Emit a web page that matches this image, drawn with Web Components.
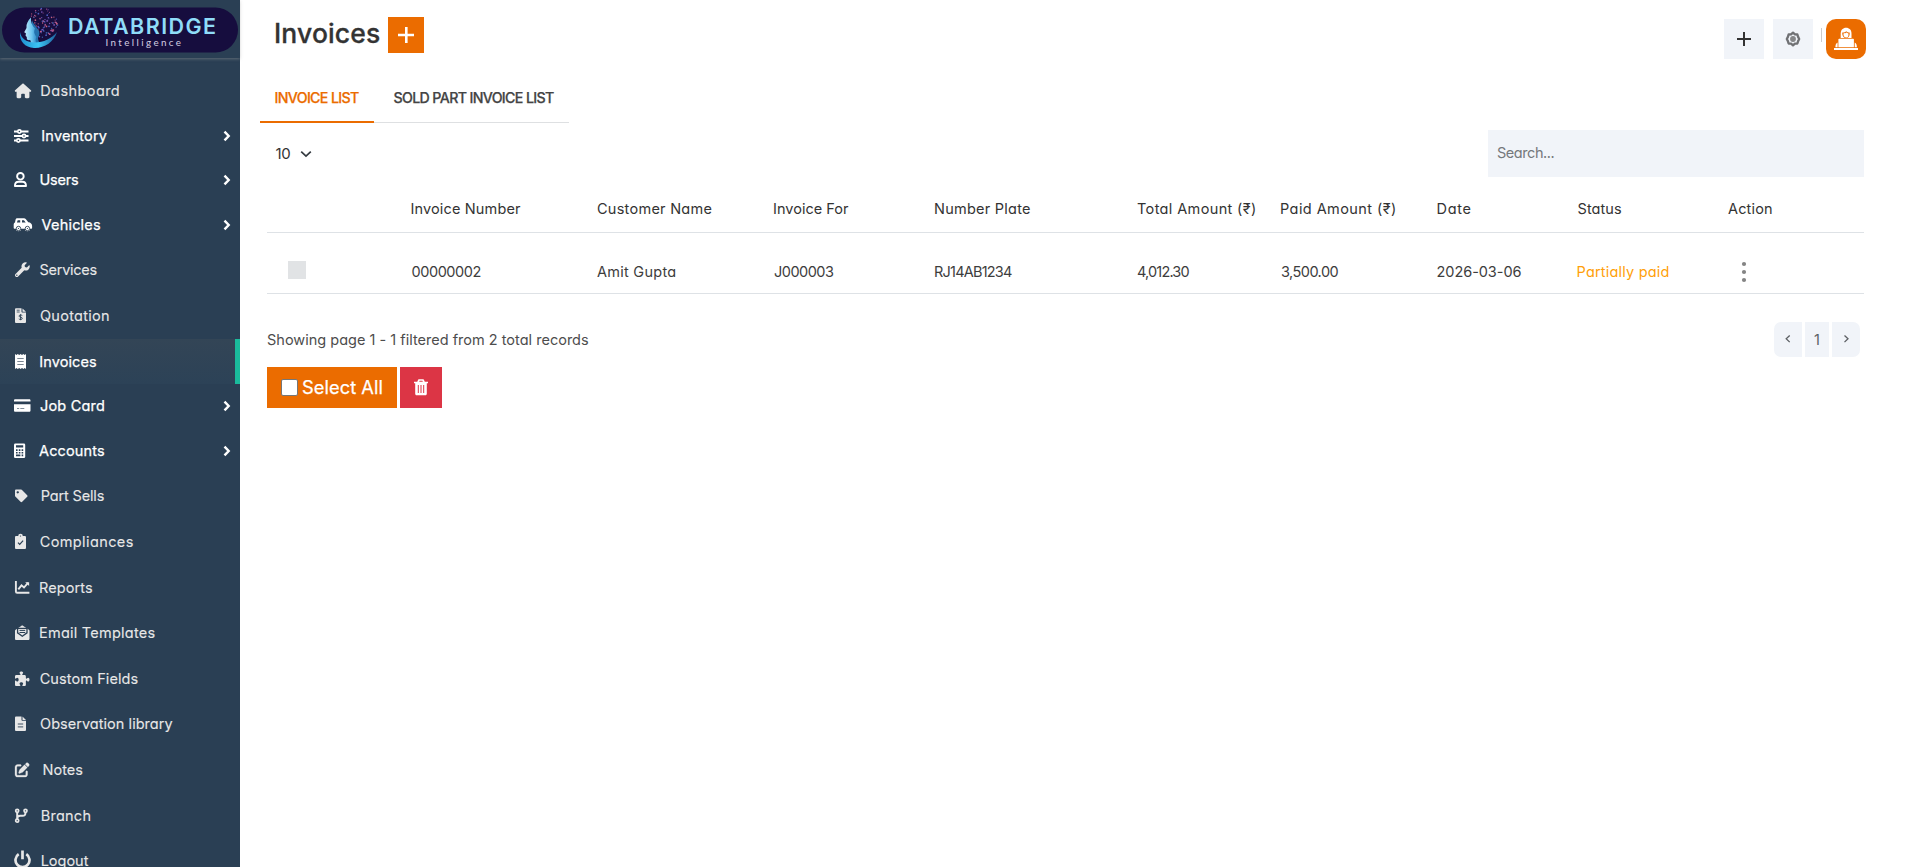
<!DOCTYPE html>
<html lang="en">
<head>
<meta charset="utf-8">
<title>Invoices</title>
<style>
html,body{margin:0;height:100%;overflow:hidden;background:#fff}
body{font-family:Inter,"Open Sans","Noto Sans",sans-serif;font-size:14.5px;font-feature-settings:"cv11";color:#333}
</style>
</head>
<body>
<app-shell></app-shell>
<script>
const define = (name, html, init) => customElements.define(name, class extends HTMLElement {
  constructor() {
    super();
    this.attachShadow({mode: 'open'});
  }
  connectedCallback() {
    if (this.ready) return;
    this.ready = true;
    this.shadowRoot.innerHTML = typeof html === 'function' ? html(this) : html;
    if (init) init(this);
  }
});

/* Text whose visible ink spans a given width, by adjusting its tracking. */
const ctx = document.createElement('canvas').getContext('2d');
define('fit-text', '<style>:host{display:inline-block;white-space:pre;vertical-align:top}</style><slot></slot>', el => {
  const cs = getComputedStyle(el), text = el.textContent;
  ctx.font = `${cs.fontWeight} ${cs.fontSize} ${cs.fontFamily}`;
  const first = ctx.measureText(text[0]), last = ctx.measureText(text[text.length - 1]);
  const lb = -first.actualBoundingBoxLeft, rb = last.width - last.actualBoundingBoxRight;
  const ink = el.getBoundingClientRect().width - lb - rb;
  if (text.length > 1) el.style.letterSpacing = ((+el.getAttribute('w') - ink) / (text.length - 1)).toFixed(3) + 'px';
  el.style.marginLeft = (-lb).toFixed(2) + 'px';
});

const B = 'var(--bg)';
const ICONS = {
  home: '<path transform="translate(1.8 2.6) scale(.0285)" d="M575.8 255.5c0 18-15 32.1-32 32.1h-32l.7 160.2c0 2.7-.2 5.4-.5 8.1V472c0 22.1-17.9 40-40 40H392c-22.1 0-40-17.9-40-40V384c0-17.7-14.3-32-32-32H256c-17.7 0-32 14.3-32 32v88c0 22.1-17.9 40-40 40H104c-22.1 0-40-17.9-40-40V287.6H32c-18 0-32-14-32-32.1c0-9 3-17 10-24L266.4 8c7-7 15-8 22-8s15 2 21 7L564.8 231.5c8 7 12 15 11 24z"/>',
  sliders: `<path d="M1 5.5h14.5M1 10h14.5M1 14.5h14.5" stroke="currentColor" stroke-width="2" fill="none"/><g fill="${B}" stroke="currentColor" stroke-width="1.6"><circle cx="6.4" cy="5.5" r="1.6"/><circle cx="11" cy="10" r="1.6"/><circle cx="5.4" cy="14.5" r="1.6"/></g>`,
  user: '<g fill="none" stroke="currentColor" stroke-width="1.9"><circle cx="7.4" cy="6.3" r="3.3"/><path d="M1.900 16c0-3 1.600-4.200 3.700-4.200h3.700c2.100 0 3.700 1.200 3.700 4.200z" stroke-linejoin="round"/></g>',
  car: `<path d="M4.3 3.2h6.600c.8 0 1.500.4 2 1l2.400 3.100c2.300.2 3.800 1.600 3.800 3.700v1.800c0 .6-.4 1-1 1h-1.200a2.500 2.500 0 0 1-5 0H8a2.500 2.500 0 0 1-5 0H1.700c-.6 0-1-.4-1-1V9.500c0-1 .5-1.800 1.300-2.100L2.600 4.400c.3-.7.9-1.200 1.700-1.200z"/><path d="M4.700 5.200h2.500v2.200H3.900zM9 5.200h2l1.700 2.200H9z" fill="${B}"/><g fill="currentColor" stroke="${B}" stroke-width=".9"><circle cx="5.500" cy="13.500" r="2.200"/><circle cx="14.400" cy="13.500" r="2.200"/></g><g fill="${B}"><circle cx="5.500" cy="13.500" r=".6"/><circle cx="14.400" cy="13.500" r=".6"/></g>`,
  wrench: '<path transform="translate(2 2.300) scale(.0288)" d="M507.730 109.100c-2.240-9.030-13.540-12.090-20.120-5.510l-74.360 74.360-67.880-11.310-11.310-67.880 74.360-74.360c6.620-6.620 3.430-17.900-5.660-20.160-47.380-11.740-99.550.910-136.580 37.930-39.640 39.640-50.550 97.100-34.050 147.200L18.740 402.760c-24.990 24.990-24.990 65.510 0 90.500 24.990 24.990 65.510 24.990 90.500 0l213.210-213.210c50.120 16.710 107.470 5.680 147.370-34.220 37.070-37.070 49.700-89.320 37.910-136.730zM64 472c-13.250 0-24-10.750-24-24 0-13.260 10.750-24 24-24s24 10.740 24 24c0 13.250-10.750 24-24 24z"/>',
  quote: `<path d="M3.200 2.300h5.300v3.200c0 .6.4 1 1 1H13v9.200c0 .8-.5 1.300-1.300 1.300H3.300c-.8 0-1.300-.5-1.300-1.300V3.500c0-.7.5-1.200 1.200-1.200zM9.500 2.400 13 5.700H9.500z"/><path d="M3.700 4.200h3M3.700 6h3" stroke="${B}" stroke-width=".8"/><path d="M9.300 9.500c-.5-.5-3.300-.9-3.300.6 0 1.400 3.300.8 3.300 2.300 0 1.400-2.700 1.300-3.500.5M7.600 8.200v6" fill="none" stroke="${B}" stroke-width=".9"/>`,
  receipt: `<path d="M2 2l1.400 1.100L4.800 2l1.400 1.100L7.600 2 9 3.100 10.400 2l1.300 1.100L13 2v15l-1.300-1.100L10.400 17 9 15.900 7.600 17l-1.400-1.100L4.800 17l-1.400-1.100L2 17z"/><path d="M4.300 6.500h6.400M4.300 9.500h6.400M4.300 12.500h6.400" stroke="${B}" stroke-width=".8" opacity=".8"/>`,
  card: `<path d="M2.300 3.200h13.900c.8 0 1.300.5 1.300 1.300v.9H1v-.9c0-.8.500-1.300 1.300-1.300zM1 8.200h16.500v6.300c0 .8-.5 1.300-1.300 1.300H2.300c-.8 0-1.300-.5-1.300-1.300z"/><path d="M4 12.500h2.200M7.300 12.500h4" stroke="${B}" stroke-width=".6"/>`,
  calc: `<rect x="1" y="2.400" width="11.200" height="14.600" rx="1.300"/><path d="M3 4.300h7.200v2.200H3zM3 8.300h1.600v1.600H3zM5.800 8.300h1.600v1.600H5.800zM8.600 8.300h1.600v1.600H8.600zM3 11h1.600v1.600H3zM5.800 11h1.600v1.600H5.800zM8.600 11h1.600v1.600H8.600zM3 13.600h4.400v1.600H3zM8.600 13.600h1.600v1.600H8.600z" fill="${B}"/>`,
  tag: '<path transform="translate(2 3.600) scale(.0245)" d="M0 252.118V48C0 21.490 21.490 0 48 0h204.118a48 48 0 0 1 33.941 14.059l211.882 211.882c18.745 18.745 18.745 49.137 0 67.882L293.823 497.941c-18.745 18.745-49.137 18.745-67.882 0L14.059 286.059A48 48 0 0 1 0 252.118zM112 64c-26.510 0-48 21.490-48 48s21.490 48 48 48 48-21.490 48-48-21.490-48-48-48z"/>',
  clip: `<path d="M3.300 4h1.900a2.300 2.300 0 0 1 4.600 0h1.900c.8 0 1.300.5 1.300 1.300v10.400c0 .8-.5 1.300-1.300 1.300H3.300c-.8 0-1.300-.5-1.300-1.300V5.300C2 4.500 2.500 4 3.300 4z"/><circle cx="7.500" cy="4" r=".6" fill="${B}"/><path d="M5 10.700l1.700 1.700 3.400-3.800" fill="none" stroke="${B}" stroke-width="1.200"/>`,
  chart: '<path d="M2.900 3v10.500c0 .8.400 1.300 1.200 1.300h12.300" fill="none" stroke="currentColor" stroke-width="1.900"/><path d="M5.300 11.300l3.200-4 2.500 2.200 4-4.700" fill="none" stroke="currentColor" stroke-width="1.900"/><path d="M12.200 4.200h3.900v3.900z"/>',
  mail: `<path d="M2 7.800c0-.5.200-.8.600-1.100L8.200 2.900c.7-.5 1.400-.5 2.100 0l5.600 3.800c.4.300.6.600.6 1.100v7.900c0 .8-.5 1.300-1.300 1.300H3.300c-.8 0-1.300-.5-1.300-1.300z"/><path d="M4.600 5.300h9.400v4.500l-4.700 3.500-4.700-3.500z" fill="currentColor" stroke="${B}" stroke-width="1.300"/><path d="M6.500 7.400h5.700M6.500 9.500h5.700" stroke="${B}" stroke-width="1" fill="none"/>`,
  puzzle: '<path transform="translate(2 2.500) scale(.0283)" d="M192 104.800c0-9.200-5.800-17.300-13.200-22.800C167.200 73.300 160 61.300 160 48c0-26.500 28.700-48 64-48s64 21.500 64 48c0 13.300-7.200 25.300-18.800 34c-7.400 5.500-13.200 13.600-13.200 22.800c0 12.800 10.400 23.200 23.200 23.200H336c26.500 0 48 21.500 48 48v56.800c0 12.800 10.400 23.200 23.200 23.200c9.200 0 17.300-5.800 22.800-13.200c8.700-11.600 20.700-18.800 34-18.800c26.500 0 48 28.700 48 64s-21.500 64-48 64c-13.300 0-25.300-7.200-34-18.800c-5.500-7.400-13.600-13.200-22.800-13.200c-12.800 0-23.200 10.400-23.200 23.200V464c0 26.500-21.500 48-48 48H279.200c-12.800 0-23.200-10.400-23.200-23.200c0-9.200 5.800-17.300 13.200-22.800c11.600-8.700 18.800-20.700 18.800-34c0-26.500-28.700-48-64-48s-64 21.500-64 48c0 13.300 7.200 25.300 18.800 34c7.400 5.500 13.200 13.600 13.200 22.800c0 12.800-10.400 23.200-23.200 23.200H48c-26.500 0-48-21.500-48-48V343.200C0 330.400 10.400 320 23.200 320c9.200 0 17.300 5.800 22.800 13.200C54.700 344.800 66.700 352 80 352c26.500 0 48-28.700 48-64s-21.500-64-48-64c-13.300 0-25.300 7.200-34 18.800C40.500 250.200 32.400 256 23.200 256C10.400 256 0 245.600 0 232.800V176c0-26.500 21.500-48 48-48H168.800c12.800 0 23.200-10.400 23.200-23.200z"/>',
  file: `<path d="M3.300 2.500h5.200v3.200c0 .6.400 1 1 1H13v9c0 .8-.5 1.300-1.300 1.300H3.300c-.8 0-1.300-.5-1.300-1.300V3.800c0-.8.500-1.300 1.300-1.300zM9.500 2.600 13 5.900H9.500z"/><path d="M4.800 10h5.400M4.800 12.900h5.400" stroke="${B}" stroke-width=".9"/>`,
  pen: '<path transform="translate(2 2.700) scale(.0281)" stroke="currentColor" stroke-width="10" d="M471.600 21.700c-21.900-21.900-57.300-21.900-79.200 0L362.300 51.700l97.900 97.900 30.100-30.100c21.900-21.900 21.900-57.300 0-79.200L471.600 21.700zm-299.200 220c-6.100 6.100-10.800 13.600-13.500 21.900l-29.600 88.800c-2.900 8.600-.6 18.100 5.800 24.600s15.900 8.700 24.600 5.800l88.800-29.600c8.200-2.700 15.700-7.400 21.900-13.500L437.700 172.300 339.700 74.300 172.400 241.700zM96 64C43 64 0 107 0 160V416c0 53 43 96 96 96H352c53 0 96-43 96-96V320c0-17.700-14.300-32-32-32s-32 14.300-32 32v96c0 17.700-14.300 32-32 32H96c-17.700 0-32-14.300-32-32V160c0-17.700 14.300-32 32-32h96c17.700 0 32-14.300 32-32s-14.300-32-32-32H96z"/>',
  branch: '<g fill="none" stroke="currentColor" stroke-width="1.700"><circle cx="4.200" cy="4.800" r="1.500"/><circle cx="12.500" cy="4.800" r="1.500"/><circle cx="4.200" cy="14.700" r="1.500"/><path d="M4.200 6.300v6.900M12.500 6.300c0 2.800-.8 3.500-3 3.500H7.300c-2 0-3.100.7-3.100 2.800" stroke-width="2"/></g>',
  power: '<path d="M5.700 3.200A7 7 0 1 0 13.300 3.200M9.500-.4v8.600" fill="none" stroke="currentColor" stroke-width="2.700"/>'
};

define('nav-item', el => {
  const a = n => el.getAttribute(n), more = el.hasAttribute('more'), strong = more || el.hasAttribute('active');
  return `<style>
  :host{--bg:#2a3f54;display:block;box-sizing:border-box;height:${a('h')}px;color:${strong ? '#fff' : '#e7e7e7'}}
  .row{display:flex;height:45px;line-height:45px;box-sizing:border-box;padding-left:13px}
  :host([active]) .row{--bg:#2e4356;background:linear-gradient(#334556,#2c4257);border-right:5px solid #1abb9c}
  .ico{width:20px;height:20px;margin-top:13px;flex:none;overflow:visible}
  .label{padding-left:${a('x') - 33}px;flex:1;-webkit-text-stroke:${strong ? '.25px #fff' : '.1px #e7e7e7'}}
  .chev{width:8px;height:12px;margin:17px 9.500px 0 0}
  </style><div class="row"><svg class="ico" viewBox="0 0 20 20" fill="currentColor">${ICONS[a('icon')]}</svg>
  <div class="label"><fit-text w="${a('w')}">${a('label')}</fit-text></div>
  ${more ? '<svg class="chev" viewBox="0 0 8 12"><path d="M1.500 1.600l4.200 4.400-4.200 4.400" fill="none" stroke="#fff" stroke-width="2.400"/></svg>' : ''}</div>`;
});

const dots = () => {
  let s = 11, out = '';
  const r = () => (s = (s * 16807) % 2147483647) / 2147483647;
  const cols = ['#b0568f', '#4d5fc0', '#c8607f', '#38599f', '#7755b5'];
  for (let i = 0; i < 110; i++) {
    const t = r() * 6.283, d = Math.sqrt(r());
    const x = 43 + Math.cos(t) * d * 15, y = 23 + Math.sin(t) * d * 14.5;
    if (x < 33 && y > 18 || y > 38) continue;
    out += `<circle cx="${x.toFixed(1)}" cy="${y.toFixed(1)}" r="${(.4 + r() * .55).toFixed(2)}" fill="${cols[i % 5]}"/>`;
  }
  return out;
};
define('brand-logo', () => `<style>:host{display:block;width:240px;height:58px}svg{display:block}</style>
<svg width="240" height="58" viewBox="0 0 240 58">
<defs><linearGradient id="f" x1="0" x2="1"><stop offset="0" stop-color="#c4ebfc"/><stop offset=".6" stop-color="#6cc5ef"/><stop offset="1" stop-color="#2a86c6"/></linearGradient>
<linearGradient id="c" x1="0" x2="1"><stop offset="0" stop-color="#1e8ed0"/><stop offset=".5" stop-color="#3cc4f4"/><stop offset="1" stop-color="#1d5f9d"/></linearGradient></defs>
<rect x="2" y="7.500" width="236" height="45" rx="22.500" fill="#160d3e"/>
${dots()}
<path d="M32 20c1 4 5 7 7 11 1 3 0 5-1 7 .2 2 .8 4 2 5.500l-9-1z" fill="#2473ae"/>
<path d="M31 17.500c-3 3-5 6.500-4.500 10.500l-2.300 4.200 1.700 1-.3 2.500 1.200 1.200c-.3 2.700.8 3.600 3.400 3.200l1.300 4 5.500.3c-2-3-1.500-5.500-.5-7.300-2.500-3-3-5.500-1.500-8.500-3-3-4.500-7-4-11.100z" fill="url(#f)"/>
<path d="M20 32c1 6.500 6 10 14 10.500 9 .3 17-3.500 23-10.500-3 10-13 16.500-23 16-9-.4-15-7-14-16z" fill="url(#c)"/>
<text x="68" y="34" font-family="Inter,sans-serif" font-size="21.500" font-weight="600" fill="#8fdcf8" textLength="148">DATABRIDGE</text>
<text x="105.500" y="45.500" font-family="Lato,sans-serif" font-size="9.800" fill="#d5cfe2" textLength="75.500">Intelligence</text>
</svg>`);

const NAV = [
  ['home', 'Dashboard', 41.300, 77.500, 45], ['sliders', 'Inventory', 42.300, 64.500, 44, 1], ['user', 'Users', 40.500, 37.500, 45, 1],
  ['car', 'Vehicles', 41.500, 58.500, 45, 1], ['wrench', 'Services', 39.500, 57, 46], ['quote', 'Quotation', 40, 69, 46],
  ['receipt', 'Invoices', 40.300, 55.700, 44, 0, 1], ['card', 'Job Card', 40, 64, 45, 1], ['calc', 'Accounts', 39, 65, 45, 1],
  ['tag', 'Part Sells', 41.700, 62, 46], ['clip', 'Compliances', 39.700, 93, 46], ['chart', 'Reports', 40, 52, 45],
  ['mail', 'Email Templates', 40, 114.500, 46], ['puzzle', 'Custom Fields', 39.700, 97.800, 45], ['file', 'Observation library', 40, 132.500, 46],
  ['pen', 'Notes', 43.500, 38.700, 46], ['branch', 'Branch', 41.700, 48.700, 45], ['power', 'Logout', 41.700, 47, 45]
];
define('side-bar', () => `<style>:host{display:block;width:240px;height:867px;background:#2a3f54;flex:none}
header{height:58px;box-shadow:0 1px 3px rgba(160,160,160,.45);margin-bottom:10px}</style>
<header><brand-logo></brand-logo></header>
<nav>${NAV.map(([i, l, x, w, h, m, act]) => `<nav-item icon="${i}" label="${l}" x="${x}" w="${w}" h="${h}"${m ? ' more' : ''}${act ? ' active' : ''}></nav-item>`).join('')}</nav>`);

define('top-bar', `<style>
:host{display:flex;height:70px;padding:0 53px 0 36px;align-items:flex-start}
h1{margin:14px 0 0;width:112px;font-size:26.500px;line-height:38px;font-weight:500;color:#333;-webkit-text-stroke:.3px #333}
.add{width:36px;height:36px;margin-top:17px;background:#eb6c00}
.tools{display:flex;margin:19px 0 0 auto}
.sq{width:40px;height:40px;background:#f1f4f9;margin-right:9px}
.sep{width:1px;height:14px;background:#ccc;margin:9px 4px 0 -1px}
.av{width:40px;height:40px;border-radius:10px;background:#eb6c00}
svg{display:block}
</style>
<h1><fit-text w="104">Invoices</fit-text></h1>
<div class="add"><svg width="36" height="36"><path d="M18.300 10v16M10 18h16" stroke="#fff" stroke-width="2.600"/></svg></div>
<div class="tools">
<div class="sq"><svg width="40" height="40"><path d="M20 13v14M13 20h14" stroke="#333" stroke-width="2"/></svg></div>
<div class="sq"><svg width="40" height="40" fill="none" stroke="#707174"><path d="M20 13.600l1.900 1.700 2.500.2.700 2.400 1.100 2.100-1.100 2.100-.7 2.400-2.500.2-1.900 1.700-1.900-1.700-2.500-.2-.7-2.400-1.100-2.100 1.100-2.100.7-2.400 2.500-.2z" stroke-width="2.300" stroke-linejoin="round"/><circle cx="20" cy="20" r="2.300" fill="#858688" stroke="#858688" stroke-width="1.200"/></svg></div>
<div class="sep"></div>
<div class="av"><svg width="40" height="40" fill="#fff"><path d="M14.700 19v-4.500c0-3.500 2.300-5.700 5.400-5.700s5.400 2.200 5.400 5.700V19z"/><path d="M16.300 13.600c2 0 3.200-.6 4-1.400.7.900 1.900 1.300 3.300 1.400.5 3.400-1.200 5.600-3.500 5.600s-4.100-2.200-3.800-5.600z" fill="#eb6c00"/><path d="M17.400 14.500c1.600-.1 2.400-.5 3-1 .5.500 1.200.8 2.100.9.200 2.900-.8 4.200-2.400 4.200s-2.800-1.300-2.700-4.100z"/><path d="M13.200 19.700h13.900c.5 0 .8.300.8.800v7.700H12.400v-7.700c0-.5.300-.8.800-.8z"/><path d="M11.600 23.500v4.700H9.400c0-2.200.6-3.900 2.200-4.700zM28.700 23.500v4.700h2.200c0-2.200-.6-3.900-2.200-4.700zM8 29h24v2H8z"/></svg></div>
</div>`);

define('tab-bar', `<style>
:host{display:flex;height:53px;margin-left:20px;font-size:14.200px;font-weight:500;line-height:30px;color:#444}
div{box-sizing:border-box;padding-top:13px;height:53px;-webkit-text-stroke:.25px currentColor}
.a{width:114px;padding-left:15.500px;color:#eb6c00;border-bottom:2px solid #eb6c00}
.b{width:195px;padding-left:19.500px;border-bottom:1px solid #dee0e2}
</style><div class="a"><fit-text w="83.500">INVOICE LIST</fit-text></div><div class="b"><fit-text w="160.500">SOLD PART INVOICE LIST</fit-text></div>`);

define('list-controls', `<style>
:host{display:flex;justify-content:space-between;padding:7px 55px 0 35.500px;height:47px;line-height:46px}
.size{display:flex;align-items:center;font-size:15px}
.size span{width:24.500px}
.search{width:376px;height:47px;box-sizing:border-box;background:#f1f4f9;padding-left:9px;color:#75787c}
</style><div class="size"><span><fit-text w="14.800">10</fit-text></span><svg width="12" height="8"><path d="M1.200 1.700l4.800 4.500 4.800-4.500" fill="none" stroke="#343a40" stroke-width="1.700"/></svg></div>
<div class="search"><fit-text w="57.500">Search...</fit-text></div>`);

const HEAD = [['Invoice Number', 109.500], ['Customer Name', 114.500], ['Invoice For', 75], ['Number Plate', 95], ['Total Amount (₹)', 118], ['Paid Amount (₹)', 114], ['Date', 33], ['Status', 43.500], ['Action', 44]];
const ROW = [['00000002', 69], ['Amit Gupta', 79], ['J000003', 60], ['RJ14AB1234', 77], ['4,012.30', 52.500], ['3,500.00', 57.500], ['2026-03-06', 84], ['Partially paid', 91]];
const cell = ([t, w]) => `<span><fit-text w="${w}">${t}</fit-text></span>`;
define('invoice-table', `<style>
:host{display:block;margin:0 55px 0 27px;line-height:40px}
.r{display:grid;box-sizing:border-box;grid-template-columns:144.500px 185.500px 177px 161px 202px 144px 156.500px 140px 150.500px 1fr;border-bottom:1px solid #dee2e6}
.h{height:56px;padding-top:12px;color:#333}
.d{height:61px;padding-top:19px;color:#3d3d3d}
.d span:nth-child(9){color:#ff9f0a}
.box{width:18px;height:18px;margin:9px 0 0 21px;background:#e1e3e5}
svg{margin-left:13px}
</style><div class="r h"><i></i>${HEAD.map(cell).join('')}</div>
<div class="r d"><div class="box"></div>${ROW.map(cell).join('')}<svg width="6" height="40" fill="#848484"><circle cx="3" cy="12" r="2.100"/><circle cx="3" cy="20" r="2.100"/><circle cx="3" cy="28" r="2.100"/></svg></div>`);

define('table-footer', `<style>
:host{display:block;margin:0 59px 0 27px;padding-top:28px}
.info{display:flex;justify-content:space-between;height:35px;line-height:35px;color:#4d4d4d}
.pager{display:flex;gap:3px;color:#5c5f63}
.pager div{width:28px;background:#f1f4f9;text-align:center}
.pager div:first-child{border-radius:7px 0 0 7px}
.pager div:nth-child(2){width:24px}
.pager div:last-child{border-radius:0 7px 7px 0}
.acts{display:flex;gap:3px;margin-top:10px}
.all{display:flex;box-sizing:border-box;width:130px;height:41px;background:#eb6c00;color:#fff;font-size:18.300px;line-height:40px;padding-left:14px;-webkit-text-stroke:.25px #fff}
.cb{box-sizing:border-box;width:17px;height:17px;margin:12px 5px 0 0;background:#fff;border:1px solid #767676;border-radius:2px}
.del{width:42px;height:41px;background:#dc3545}
svg{display:block}
</style>
<div class="info"><span><fit-text w="321">Showing page 1 - 1 filtered from 2 total records</fit-text></span>
<div class="pager"><div><svg width="28" height="35"><path d="M15.700 13.500l-3.500 3.300 3.500 3.300" fill="none" stroke="#5c5f63" stroke-width="1.300"/></svg></div><div>1</div><div><svg width="28" height="35"><path d="M12.500 13.500l3.500 3.300-3.500 3.300" fill="none" stroke="#5c5f63" stroke-width="1.300"/></svg></div></div></div>
<div class="acts"><div class="all"><div class="cb"></div><fit-text w="79.500">Select All</fit-text></div>
<div class="del"><svg width="42" height="41"><path d="M14 15.500h14M18 15l1-2h4l1 2" stroke="#fff" stroke-width="1.700" fill="none"/><path d="M15.200 16h11.600v10.800c0 .9-.5 1.500-1.400 1.500h-8.800c-.9 0-1.400-.6-1.400-1.500z" fill="#fff"/><path d="M18.300 18v8M21 18v8M23.700 18v8" stroke="#dc3545" stroke-width="1"/></svg></div></div>`);

define('app-shell', `<style>:host{display:flex;width:1919px;height:867px;overflow:hidden}
main{flex:1;min-width:0}
</style><side-bar></side-bar><main><top-bar></top-bar><tab-bar></tab-bar><list-controls></list-controls><invoice-table></invoice-table><table-footer></table-footer></main>`);
</script>
</body>
</html>
